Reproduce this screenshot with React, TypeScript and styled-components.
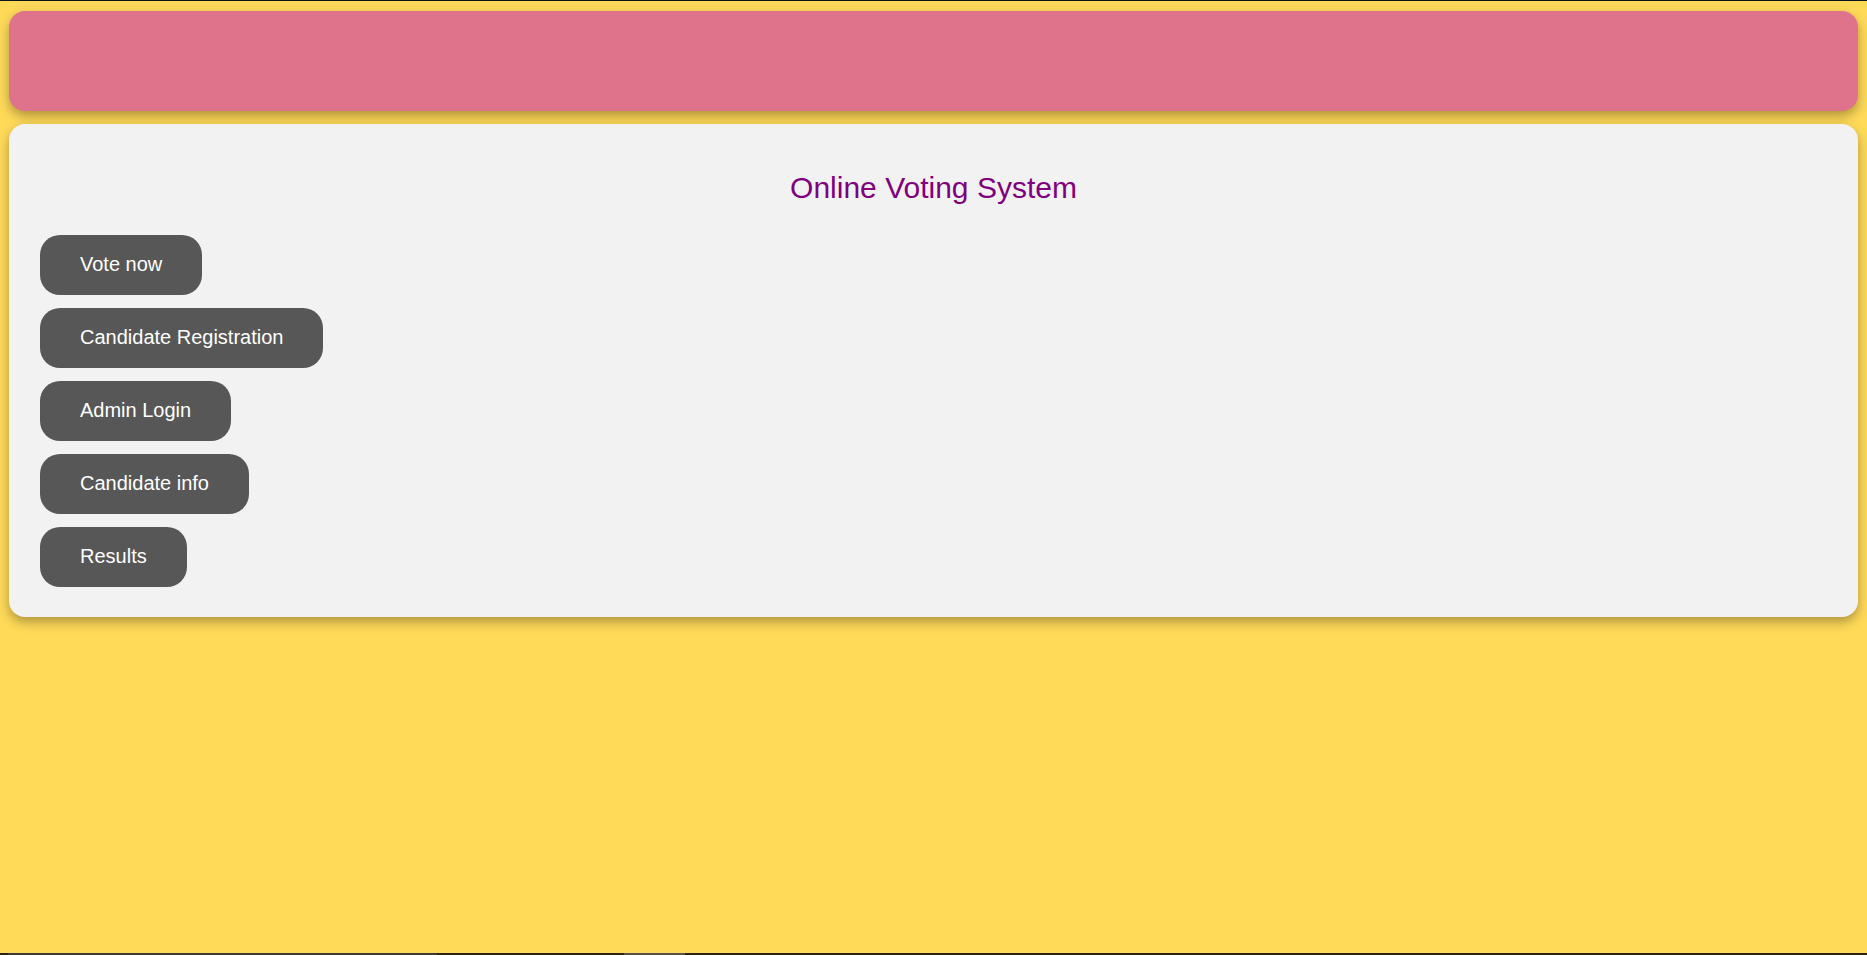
import React from "react";
import styled, { createGlobalStyle } from "styled-components";

const GlobalStyle = createGlobalStyle`
  html, body {
    margin: 0;
    padding: 0;
    background: #ffda59;
    font-family: "Liberation Sans", Arial, sans-serif;
  }
  #root {
    min-height: 100vh;
  }
`;

const Page = styled.div`
  box-sizing: border-box;
  min-height: 100vh;
  padding: 10px 9px 0 9px;
  border-top: 1px solid #10131c;
  display: flex;
  flex-direction: column;
  gap: 13px;
`;

const Header = styled.header`
  height: 100px;
  background: #df738c;
  border-radius: 16px;
  box-shadow: 0 5px 12px rgba(0, 0, 0, 0.32);
`;

const Card = styled.main`
  background: #f2f2f2;
  border-radius: 16px;
  box-shadow: 0 5px 12px rgba(0, 0, 0, 0.32);
  padding: 47px 31px 30px 31px;
  display: flex;
  flex-direction: column;
  align-items: flex-start;
`;

const Title = styled.h1`
  align-self: stretch;
  margin: 0 0 30px 0;
  text-align: center;
  font-size: 30px;
  font-weight: normal;
  line-height: 34px;
  color: #800080;
`;

const Menu = styled.nav`
  display: flex;
  flex-direction: column;
  align-items: flex-start;
  gap: 13px;
`;

const MenuButton = styled.button`
  height: 60px;
  padding: 0 40px 1px 40px;
  border: none;
  border-radius: 20px;
  background: #575757;
  color: #ffffff;
  font-family: "Liberation Sans", Arial, sans-serif;
  font-size: 20px;
  cursor: pointer;
`;

const BottomStrip = styled.div`
  position: fixed;
  left: 0;
  right: 0;
  bottom: 0;
  height: 2px;
  background: #2b2619;
`;

const StripSegment = styled.div<{ $left: number; $width: number; $color: string }>`
  position: absolute;
  top: 0;
  bottom: 0;
  left: ${(p) => p.$left}px;
  width: ${(p) => p.$width}px;
  background: ${(p) => p.$color};
`;

const items = [
  "Vote now",
  "Candidate Registration",
  "Admin Login",
  "Candidate info",
  "Results",
];

export default function App() {
  return (
    <>
      <GlobalStyle />
      <Page>
        <Header />
        <Card>
          <Title>Online Voting System</Title>
          <Menu>
            {items.map((label) => (
              <MenuButton key={label}>{label}</MenuButton>
            ))}
          </Menu>
        </Card>
      </Page>
      <BottomStrip>
        <StripSegment $left={8} $width={429} $color="#3b3b3b" />
        <StripSegment $left={624} $width={61} $color="#55514a" />
      </BottomStrip>
    </>
  );
}
